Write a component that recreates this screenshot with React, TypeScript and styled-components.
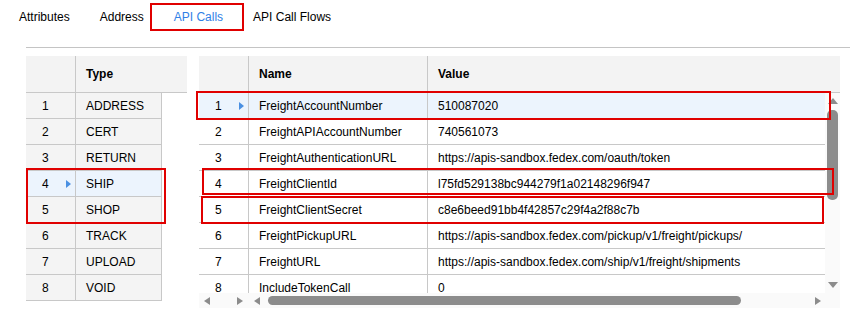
import React from 'react'
import styled, { createGlobalStyle } from 'styled-components'

const line = '#c8c8c8'
const headBg = '#f3f3f3'
const selBg = '#ecf4fd'
const barBg = '#fafafa'
const barInk = '#8c8c8c'

const GlobalStyle = createGlobalStyle`
  html, body {
    margin: 0;
    padding: 0;
    background: #fff;
  }
  body {
    font-family: "Liberation Sans", Arial, sans-serif;
    font-size: 12px;
    color: #000;
  }
`

const Page = styled.div`
  position: relative;
  width: 858px;
  height: 331px;
  overflow: hidden;
`

// tabs
const TabBar = styled.nav`
  display: flex;
  height: 34px;
  padding-left: 4px;
`

const Tab = styled.div<{ $active?: boolean }>`
  padding: 0 15px;
  line-height: 34px;
  font-size: 12px;
  color: ${(p) => (p.$active ? '#2f7fe6' : '#000')};
`

const Divider = styled.div`
  height: 1px;
  margin: 13px 8px 0 26px;
  background: #c4c4c4;
`

const Panels = styled.div`
  display: flex;
  gap: 12px;
  padding-left: 26px;
  margin-top: 8px;
`

// grid parts
const Grid = styled.div<{ $width: number }>`
  width: ${(p) => p.$width}px;
  display: flex;
  flex-direction: column;
`

const HeadRow = styled.div`
  display: flex;
  height: 36px;
  background: ${headBg};
  border-bottom: 1px solid ${line};
`

const HeadCell = styled.div<{ $w?: number; $last?: boolean }>`
  ${(p) => (p.$w ? `width: ${p.$w}px;` : 'flex: 1;')}
  box-sizing: border-box;
  display: flex;
  align-items: center;
  padding-left: 10px;
  font-weight: bold;
  border-right: ${(p) => (p.$last ? 'none' : `1px solid ${line}`)};
`

const Rows = styled.div<{ $width?: number }>`
  ${(p) => (p.$width ? `width: ${p.$width}px;` : '')}
`

const Row = styled.div<{ $sel?: boolean; $base: string }>`
  display: flex;
  height: 26px;
  box-sizing: border-box;
  border-bottom: 1px solid ${line};
  background: ${(p) => (p.$sel ? selBg : p.$base)};
`

const NumCell = styled.div`
  width: 50px;
  box-sizing: border-box;
  display: flex;
  align-items: center;
  justify-content: space-between;
  padding: 0 4px 0 16px;
  border-right: 1px solid ${line};
`

const Cell = styled.div<{ $w?: number; $edge?: boolean }>`
  ${(p) => (p.$w ? `width: ${p.$w}px;` : 'flex: 1;')}
  box-sizing: border-box;
  display: flex;
  align-items: center;
  padding-left: 10px;
  white-space: nowrap;
  overflow: hidden;
  border-right: ${(p) => (p.$edge ? `1px solid ${line}` : 'none')};
`

const Pointer = styled.span`
  width: 0;
  height: 0;
  border-top: 4.5px solid transparent;
  border-bottom: 4.5px solid transparent;
  border-left: 5px solid #4a90e2;
`

// scroll bars
const Body = styled.div`
  display: grid;
  grid-template-columns: 1fr 15px;
  grid-template-rows: 200px 15px;
`

const Viewport = styled.div`
  overflow: hidden;
`

const VBar = styled.div`
  background: ${barBg};
  display: flex;
  flex-direction: column;
  align-items: center;
  padding: 5px 0;
  box-sizing: border-box;
`

const HBar = styled.div`
  background: ${barBg};
  display: flex;
  align-items: center;
`

const Corner = styled.div`
  background: ${barBg};
`

const Tri = styled.span<{ $dir: 'up' | 'down' | 'left' | 'right' }>`
  width: 0;
  height: 0;
  flex: none;
  ${(p) =>
    p.$dir === 'left'
      ? `border-top: 4.5px solid transparent; border-bottom: 4.5px solid transparent; border-right: 6px solid ${barInk};`
      : p.$dir === 'right'
        ? `border-top: 4.5px solid transparent; border-bottom: 4.5px solid transparent; border-left: 6px solid ${barInk};`
        : p.$dir === 'up'
          ? `border-left: 5px solid transparent; border-right: 5px solid transparent; border-bottom: 6px solid ${barInk};`
          : `border-left: 5px solid transparent; border-right: 5px solid transparent; border-top: 6px solid ${barInk};`}
`

const VThumb = styled.div`
  width: 11px;
  height: 90px;
  margin-top: 6px;
  border-radius: 5px;
  background: ${barInk};
`

const Spacer = styled.div`
  flex: 1;
`

const FrozenScroll = styled.div`
  width: 50px;
  display: flex;
  justify-content: space-between;
  padding: 0 6px 0 5px;
  box-sizing: border-box;
`

const MainScroll = styled.div`
  flex: 1;
  display: flex;
  align-items: center;
  padding: 0 4px 0 5px;
`

const HThumb = styled.div`
  width: 473px;
  height: 9px;
  margin-left: 8px;
  border-radius: 5px;
  background: ${barInk};
`

// red annotation boxes drawn over the screenshot
const Mark = styled.div`
  position: absolute;
  box-sizing: border-box;
  border: 2px solid #e00000;
  pointer-events: none;
`

const types = ['ADDRESS', 'CERT', 'RETURN', 'SHIP', 'SHOP', 'TRACK', 'UPLOAD', 'VOID']

const calls = [
  ['FreightAccountNumber', '510087020'],
  ['FreightAPIAccountNumber', '740561073'],
  ['FreightAuthenticationURL', 'https://apis-sandbox.fedex.com/oauth/token'],
  ['FreightClientId', 'l75fd529138bc944279f1a02148296f947'],
  ['FreightClientSecret', 'c8e6beed91bb4f42857c29f4a2f88c7b'],
  ['FreightPickupURL', 'https://apis-sandbox.fedex.com/pickup/v1/freight/pickups/'],
  ['FreightURL', 'https://apis-sandbox.fedex.com/ship/v1/freight/shipments'],
  ['IncludeTokenCall', '0'],
]

const marks = [
  { left: 150, top: 3, width: 94, height: 28 },
  { left: 26, top: 168, width: 140, height: 56 },
  { left: 196, top: 91, width: 635, height: 29 },
  { left: 202, top: 168, width: 632, height: 27 },
  { left: 201, top: 196, width: 623, height: 28 },
]

const App = () => {
  return (
    <Page>
      <GlobalStyle />
      <TabBar>
        <Tab>Attributes</Tab>
        <Tab>Address</Tab>
        <Tab $active>API Calls</Tab>
        <Tab>API Call Flows</Tab>
      </TabBar>
      <Divider />

      <Panels>
        {/* type list */}
        <Grid $width={161}>
          <HeadRow>
            <HeadCell $w={50} />
            <HeadCell $last>Type</HeadCell>
          </HeadRow>
          <Rows $width={136}>
            {types.map((t, i) => (
              <Row key={t} $base="#f4f4f4" $sel={i === 3}>
                <NumCell>
                  {i + 1}
                  {i === 3 && <Pointer />}
                </NumCell>
                <Cell $w={86} $edge>
                  {t}
                </Cell>
              </Row>
            ))}
          </Rows>
        </Grid>

        {/* api calls */}
        <Grid $width={641}>
          <HeadRow>
            <HeadCell $w={50} />
            <HeadCell $w={179}>Name</HeadCell>
            <HeadCell $last>Value</HeadCell>
          </HeadRow>
          <Body>
            <Viewport>
              {calls.map(([name, value], i) => (
                <Row key={name} $base="#fff" $sel={i === 0}>
                  <NumCell>
                    {i + 1}
                    {i === 0 && <Pointer />}
                  </NumCell>
                  <Cell $w={179} $edge>
                    {name}
                  </Cell>
                  <Cell>{value}</Cell>
                </Row>
              ))}
            </Viewport>
            <VBar>
              <Tri $dir="up" />
              <VThumb />
              <Spacer />
              <Tri $dir="down" />
            </VBar>
            <HBar>
              <FrozenScroll>
                <Tri $dir="left" />
                <Tri $dir="right" />
              </FrozenScroll>
              <MainScroll>
                <Tri $dir="left" />
                <HThumb />
                <Spacer />
                <Tri $dir="right" />
              </MainScroll>
            </HBar>
            <Corner />
          </Body>
        </Grid>
      </Panels>

      {marks.map((m, i) => (
        <Mark key={i} style={m} />
      ))}
    </Page>
  )
}

export default App
